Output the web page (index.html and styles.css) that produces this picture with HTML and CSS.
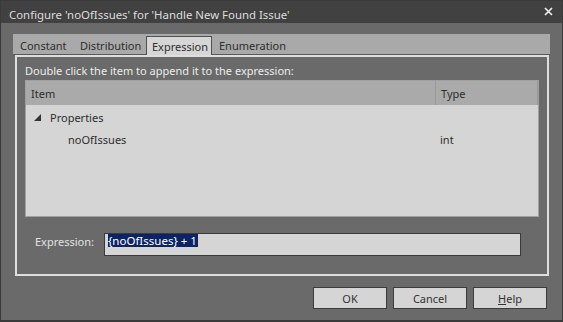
FILE: index.html
```html
<!DOCTYPE html>
<html>
<head>
<meta charset="utf-8">
<link rel="stylesheet" href="styles.css">
</head>
<body>
<div class="window">
  <div class="titlebar">
    <span class="title">Configure 'noOfIssues' for 'Handle New Found Issue'</span>
    <svg class="close" width="9" height="9" viewBox="0 0 9 9"><path d="M1 1L8 8M8 1L1 8" stroke="#f2f2f2" stroke-width="1.6"/></svg>
  </div>
  <div class="body">
    <div class="tabs">
      <div class="tab t-const">Constant</div>
      <div class="tab t-dist">Distribution</div>
      <div class="tab t-expr active">Expression</div>
      <div class="tab t-enum">Enumeration</div>
    </div>
    <div class="panel">
      <div class="hint">Double click the item to append it to the expression:</div>
      <div class="list">
        <div class="list-head">
          <div class="col-item">Item</div>
          <div class="col-type">Type</div>
        </div>
        <div class="list-body">
          <div class="row group">
            <svg class="tri" width="7" height="7" viewBox="0 0 7 7"><path d="M7 0V7H0Z" fill="#333"/></svg>
            <span>Properties</span>
          </div>
          <div class="row">
            <span class="col-item child">noOfIssues</span>
            <span class="col-type">int</span>
          </div>
        </div>
      </div>
      <div class="expr-row">
        <label class="expr-label">Expression:</label>
        <div class="expr-input"><span class="sel">{noOfIssues} + 1</span></div>
      </div>
    </div>
    <div class="buttons">
      <div class="btn">OK</div>
      <div class="btn">Cancel</div>
      <div class="btn"><u>H</u>elp</div>
    </div>
  </div>
</div>
</body>
</html>
```
FILE: styles.css
```css
html, body {
  margin: 0;
  padding: 0;
  background: #6a6a6a;
}
body {
  font-family: "Noto Sans", "Open Sans", sans-serif;
  font-size: 11px;
}
.window {
  width: 563px;
  height: 322px;
  box-sizing: border-box;
  border: 1px solid #3a3a3a;
  border-bottom-width: 2px;
  background: #6a6a6a;
  display: flex;
  flex-direction: column;
}
.titlebar {
  height: 22px;
  background: #414141;
  display: flex;
  align-items: center;
  justify-content: space-between;
  padding: 0 9px 0 8px;
  flex: none;
}
.title {
  color: #dcdcdc;
  font-size: 11.4px;
  margin-top: 5px;
}
.close {
  margin-top: -2px;
}
.body {
  flex: 1;
  display: flex;
  flex-direction: column;
  padding: 11px 12px 0 12px;
}
.tabs {
  height: 20px;
  flex: none;
  background: #a9a9a9;
  border-bottom: 1px solid #5a5a5a;
  display: flex;
  align-items: flex-end;
  padding-left: 1px;
}
.tab {
  height: 18px;
  line-height: 20px;
  color: #2e2e2e;
  box-sizing: border-box;
  padding-left: 6px;
  white-space: nowrap;
}
.t-const { width: 60px; }
.t-dist { width: 72px; }
.t-expr { width: 66px; }
.t-enum { width: 70px; padding-left: 7px; }
.tab.active {
  background: #d6d6d6;
  border: 1px solid #505050;
  border-bottom: none;
  height: 19px;
  line-height: 19px;
  margin-bottom: -1px;
  padding-left: 5px;
}
.panel {
  margin: 0 1px 0 2px;
  border: 2px solid #dedede;
  height: 221px;
  flex: none;
  box-sizing: border-box;
  padding: 0 8px 0 8px;
  display: flex;
  flex-direction: column;
}
.hint {
  color: #ececec;
  height: 23px;
  line-height: 28px;
}
.list {
  border: 1px solid #a0a0a0;
  height: 137px;
  flex: none;
  box-sizing: border-box;
  background: #d5d5d5;
  display: flex;
  flex-direction: column;
}
.list-head {
  height: 24px;
  background: #aaaaaa;
  display: flex;
  align-items: center;
  color: #2e2e2e;
  flex: none;
}
.list-head .col-item {
  width: 410px;
  padding-left: 5px;
  box-sizing: border-box;
  border-right: 1px solid #999;
  height: 24px;
  line-height: 25px;
}
.list-head .col-type {
  padding-left: 5px;
  flex: 1;
  height: 24px;
  line-height: 25px;
  border-right: 1px solid #999;
}
.list-body {
  padding-top: 1px;
  color: #2e2e2e;
}
.row {
  height: 22px;
  display: flex;
  align-items: center;
}
.row.group {
  padding-left: 8px;
}
.tri {
  margin-right: 9px;
}
.row .col-item {
  width: 414px;
  padding-left: 42px;
  box-sizing: border-box;
}
.row .col-type {
  padding-left: 0;
}
.expr-row {
  display: flex;
  align-items: center;
  margin-top: 16px;
}
.expr-label {
  color: #e2e2e2;
  width: 79px;
  padding-left: 10px;
  box-sizing: border-box;
  margin-top: -6px;
}
.expr-input {
  width: 417px;
  height: 23px;
  box-sizing: border-box;
  border: 1px solid #3a3a3a;
  background: #d5d5d5;
  padding: 0 0 0 3px;
  line-height: 13px;
}
.sel {
  background: #0a2466;
  color: #ffffff;
  display: inline-block;
  font-size: 11.5px;
  padding: 0 1px 0 0;
}
.buttons {
  display: flex;
  justify-content: flex-end;
  gap: 6px;
  margin-top: 11px;
  padding-right: 3px;
}
.btn {
  width: 74px;
  height: 22px;
  box-sizing: border-box;
  border: 1px solid #3c3c3c;
  background: #d5d5d5;
  color: #333;
  text-align: center;
  line-height: 21px;
}
```
